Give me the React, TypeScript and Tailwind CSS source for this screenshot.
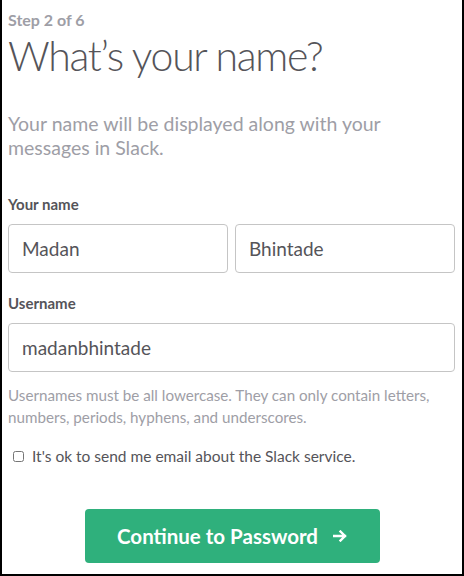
export default function App() {
  return (
    <div
      className="w-[464px] h-[576px] bg-white border-x-2 border-b-2 border-black px-[6px] text-[#555459]"
      style={{ fontFamily: 'Lato, "Noto Sans", sans-serif' }}
    >
      <div className="pt-[10px] text-[16px] leading-[20px] font-bold text-[#9e9ea6]">Step 2 of 6</div>
      <h1 className="text-[41px] leading-[52px] font-light tracking-[-1.3px]">What’s your name?</h1>

      <p className="mt-[30px] max-w-[420px] text-[19.5px] leading-[24px] text-[#9e9ea6]">
        Your name will be displayed along with your messages in Slack.
      </p>

      <label className="block mt-[34px] text-[15px] leading-[20px] font-bold">Your name</label>
      <div className="mt-[10px] flex gap-[7px]">
        <input
          defaultValue="Madan"
          className="w-[220px] h-[49px] rounded-[4px] border border-[#c5c5c5] px-[13px] text-[19px] text-[#555459] outline-none"
        />
        <input
          defaultValue="Bhintade"
          className="w-[220px] h-[49px] rounded-[4px] border border-[#c5c5c5] px-[13px] text-[19px] text-[#555459] outline-none"
        />
      </div>

      <label className="block mt-[20px] text-[15px] leading-[20px] font-bold">Username</label>
      <input
        defaultValue="madanbhintade"
        className="mt-[10px] w-[447px] h-[49px] rounded-[4px] border border-[#c5c5c5] px-[13px] text-[19px] text-[#555459] outline-none"
      />

      <p className="mt-[12px] text-[15.2px] leading-[22px] text-[#9e9ea6]">
        Usernames must be all lowercase. They can only contain letters, numbers, periods, hyphens, and underscores.
      </p>

      <label className="mt-[17px] flex items-center gap-[8px] text-[15.5px] leading-[22px]">
        <input type="checkbox" className="ml-[5px] w-[11px] h-[11px] accent-[#bbb]" />
        It's ok to send me email about the Slack service.
      </label>

      <div className="mt-[42px] flex justify-center">
        <button className="w-[295px] h-[54px] rounded-[4px] bg-[#2fb07c] text-white text-[20.5px] font-bold flex items-center justify-center gap-[15px]">
          Continue to Password
          <svg width="14" height="12" viewBox="0 0 14 12" fill="none" stroke="white" strokeWidth="2.4" strokeLinecap="square">
            <path d="M1 6h11M7.5 1.5L12 6l-4.5 4.5" />
          </svg>
        </button>
      </div>
    </div>
  );
}
